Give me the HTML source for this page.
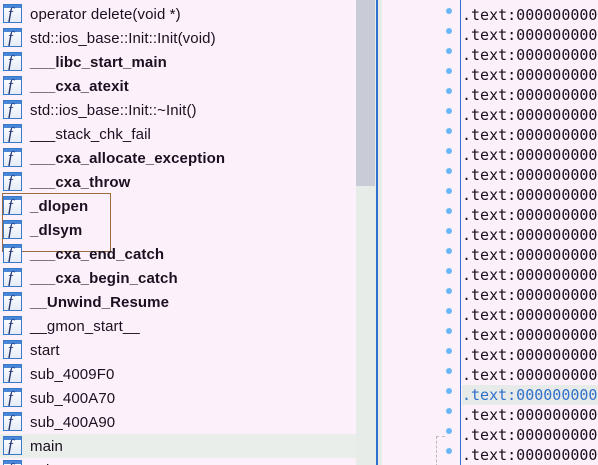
<!DOCTYPE html>
<html><head><meta charset="utf-8"><style>
html,body{margin:0;width:598px;height:465px;overflow:hidden}
body{background:#fcf1fb;position:relative;font-family:"Liberation Sans","DejaVu Sans",sans-serif}
.row{position:absolute;left:0;width:356px;height:24px}
.row .ic{position:absolute;left:3px;top:3px;width:17px;height:17px;border:1px solid #3a78c8;background:linear-gradient(#fff,#e4ecf8);box-sizing:content-box;overflow:hidden}
.row .ic:before{content:"";position:absolute;left:0;top:0;right:0;height:3px;background:#4a86d8}
.row .ic span{position:absolute;left:4px;top:0px;font:italic 17px "Liberation Serif",serif;color:#203070;line-height:18px}
.row .t{position:absolute;left:30px;top:5px;font-size:15px;color:#1a1020;white-space:nowrap;letter-spacing:0.1px}
.b{font-weight:bold}
.r{position:absolute;left:462px;font:15px "DejaVu Sans Mono","Liberation Mono",monospace;color:#1a1020;white-space:nowrap;height:20px;line-height:20px;width:136px;overflow:hidden}
.d{position:absolute;left:446px;width:6px;height:6px;border-radius:3px;background:#6ab8f8}
</style></head><body>
<div style="position:absolute;left:0;top:434px;width:356px;height:24px;background:#e9eeea"></div>
<div style="position:absolute;left:356px;top:0;width:20px;height:465px;background:#e8ece9"></div>
<div style="position:absolute;left:356px;top:0;width:19px;height:186px;background:#c9ccd6"></div>
<div style="position:absolute;left:376px;top:0;width:2px;height:465px;background:#2e6fd0"></div>
<div style="position:absolute;left:378px;top:0;width:4px;height:465px;background:#e8ece9"></div>
<div style="position:absolute;left:460px;top:0;width:1px;height:465px;background:#2e6fd0"></div>
<div style="position:absolute;left:2px;top:193px;width:107px;height:57px;border:1px solid #9a6a40"></div>
<div style="position:absolute;left:436px;top:436px;width:8px;height:30px;border-left:1px dashed #bbb;border-top:1px dashed #bbb"></div>
<div id="L"></div><div id="R"></div>
<script>
var n=[["operator delete(void *)",0],["std::ios_base::Init::Init(void)",0],["___libc_start_main",1],["___cxa_atexit",1],["std::ios_base::Init::~Init()",0],["___stack_chk_fail",0],["___cxa_allocate_exception",1],["___cxa_throw",1],["_dlopen",1],["_dlsym",1],["___cxa_end_catch",1],["___cxa_begin_catch",1],["__Unwind_Resume",1],["__gmon_start__",0],["start",0],["sub_4009F0",0],["sub_400A70",0],["sub_400A90",0],["main",0],["sub_400B60",0]];
var h="";n.forEach(function(x,i){h+='<div class="row" style="top:'+(24*i+1)+'px"><div class="ic"><span>f</span></div><div class="t'+(x[1]?' b':'')+'">'+x[0].replace(/</g,'&lt;')+'</div></div>';});
document.getElementById("L").innerHTML=h;
var r="";for(var i=-1;i<23;i++){var y=5+20*i;var hl=i==19;r+='<div class="r" style="top:'+y+'px;'+(hl?'background:#e6ebea;color:#3070c8;':'')+'">.text:0000000000</div><div class="d" style="top:'+(y+3)+'px"></div>';}
document.getElementById("R").innerHTML=r;
</script>
</body></html>
